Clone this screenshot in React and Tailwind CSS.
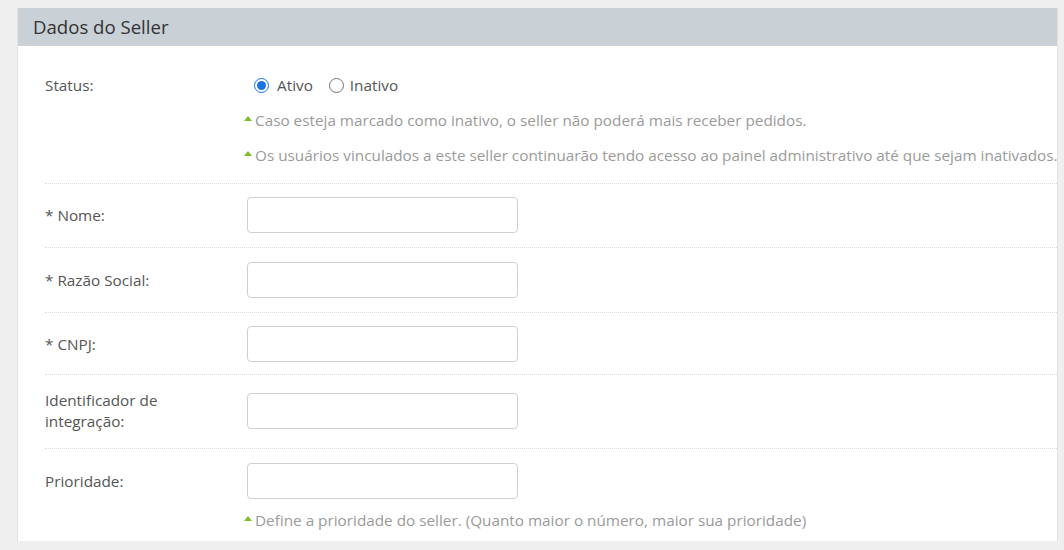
import React from 'react';

const Hint = ({ children }) => (
    <p className="flex items-center gap-[3px] -ml-[3px] text-[#9a9a9a] leading-[35px] whitespace-nowrap">
        <span className="inline-block w-0 h-0 border-x-[4px] border-x-transparent border-b-[5px] border-b-[#7cbf2a] mb-[4px]" />
        {children}
    </p>
);

const TextField = () => (
    <input type="text" className="block w-[271px] h-[36px] bg-white border border-[#cfcfcf] rounded-[4px] px-2 outline-none" />
);

const App = () => {
    const fields = [
        { label: '* Nome:', pad: 'pt-[13px] pb-[14px]' },
        { label: '* Razão Social:', pad: 'pt-[14px] pb-[14px]' },
        { label: '* CNPJ:', pad: 'pt-[13px] pb-[12px]' },
    ];

    return (
        <div className="min-h-screen bg-[#efefef] pt-2 pl-[17px] pr-[6px] font-['Source_Sans_Pro','Open_Sans',sans-serif] text-[15.3px] text-[#555]">
            <div className="bg-white border-x border-[#e2e2e2] h-[533px] overflow-hidden">
                <div className="h-[38px] bg-[#c9d0d6] flex items-center px-[15px] text-[18.6px] text-[#333]">
                    Dados do Seller
                </div>

                <div className="pl-[27px]">
                    {/* status */}
                    <div className="grid grid-cols-[202px_1fr] pt-[22px] pb-[10px] border-b border-dotted border-[#dcdcdc]">
                        <div className="leading-[35px]">Status:</div>
                        <div>
                            <div className="flex items-center h-[35px]">
                                <label className="flex items-center mr-[14px]">
                                    <input type="radio" name="status" defaultChecked className="w-[15px] h-[15px] ml-[7px] mr-[8px] accent-[#1a73e8]" />
                                    Ativo
                                </label>
                                <label className="flex items-center">
                                    <input type="radio" name="status" className="w-[15px] h-[15px] ml-[2px] mr-[6px]" />
                                    Inativo
                                </label>
                            </div>
                            <Hint>Caso esteja marcado como inativo, o seller não poderá mais receber pedidos.</Hint>
                            <Hint>Os usuários vinculados a este seller continuarão tendo acesso ao painel administrativo até que sejam inativados.</Hint>
                        </div>
                    </div>

                    {fields.map((f, i) => (
                        <div key={i} className={`grid grid-cols-[202px_1fr] items-center border-b border-dotted border-[#dcdcdc] ${f.pad}`}>
                            <div>{f.label}</div>
                            <div><TextField /></div>
                        </div>
                    ))}

                    <div className="grid grid-cols-[202px_1fr] items-center pt-[15px] pb-[16px] border-b border-dotted border-[#dcdcdc]">
                        <div className="leading-[21px]">Identificador de<br />integração:</div>
                        <div><TextField /></div>
                    </div>

                    <div className="grid grid-cols-[202px_1fr] pt-[14px]">
                        <div className="h-[36px] flex items-center">Prioridade:</div>
                        <div>
                            <TextField />
                            <div className="mt-[4px]">
                                <Hint>Define a prioridade do seller. (Quanto maior o número, maior sua prioridade)</Hint>
                            </div>
                        </div>
                    </div>
                </div>
            </div>
        </div>
    );
};

export default App;
